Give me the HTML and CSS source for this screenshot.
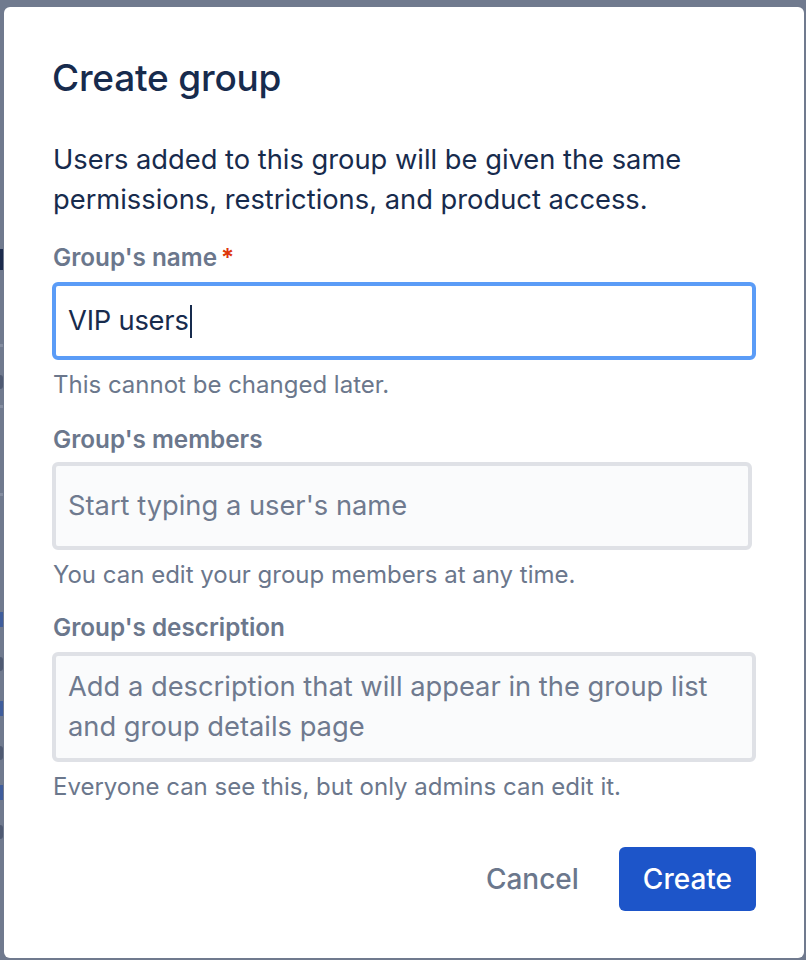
FILE: index.html
```html
<!DOCTYPE html>
<html lang="en">
<head>
<meta charset="utf-8">
<title>Create group</title>
<link rel="stylesheet" href="styles.css">
</head>
<body>
<div class="backdrop">
  <div class="peek">
    <span class="mk mk-dark m1"></span>
    <span class="mk mk-line m2"></span>
    <span class="mk mk-gray m3"></span>
    <span class="mk mk-line m4"></span>
    <span class="mk mk-line m5"></span>
    <span class="mk mk-blue m6"></span>
    <span class="mk mk-gray m7"></span>
    <span class="mk mk-blue m7"></span>
    <span class="mk mk-gray m7"></span>
    <span class="mk mk-blue m8"></span>
    <span class="mk mk-gray m8"></span>
  </div>
</div>

<section class="dialog" role="dialog" aria-labelledby="dlg-title">
  <h1 class="title" id="dlg-title">Create group</h1>
  <p class="intro">Users added to this group will be given the same permissions, restrictions, and product access.</p>

  <div class="field f1">
    <label class="label">Group's name<span class="req">*</span></label>
    <div class="input focused"><span class="value">VIP users</span><span class="caret"></span></div>
    <div class="help">This cannot be changed later.</div>
  </div>

  <div class="field f2">
    <label class="label">Group's members</label>
    <div class="input members"><span class="ph">Start typing a user's name</span></div>
    <div class="help">You can edit your group members at any time.</div>
  </div>

  <div class="field f3">
    <label class="label">Group's description</label>
    <div class="input desc"><span class="ph">Add a description that will appear in the group list and group details page</span></div>
    <div class="help">Everyone can see this, but only admins can edit it.</div>
  </div>

  <div class="actions">
    <button class="btn btn-subtle">Cancel</button>
    <button class="btn btn-primary">Create</button>
  </div>
</section>
</body>
</html>
```

FILE: styles.css
```css
* { box-sizing: border-box; }

html, body {
  margin: 0;
  padding: 0;
}

body {
  width: 806px;
  height: 960px;
  overflow: hidden;
  background: #707a8e;
  font-family: Inter, "Noto Sans", "Liberation Sans", sans-serif;
  color: #172b4d;
  position: relative;
}

.backdrop {
  width: 806px;
  height: 960px;
}

.peek {
  display: flex;
  flex-direction: column;
  width: 4px;
  padding-top: 249px;
}

.mk { display: block; width: 3px; }
.mk-dark { height: 21px; background: #1c2b4c; }
.mk-line { height: 3px; background: #858ea1; }
.mk-gray { height: 14px; background: #4f5a72; border-radius: 0 7px 7px 0; }
.mk-blue { height: 15px; background: #3f5d9c; }
.m2 { margin-top: 74px; }
.m3 { margin-top: 28px; }
.m4 { margin-top: 16px; }
.m5 { margin-top: 85px; }
.m6 { margin-top: 116px; }
.m7 { margin-top: 30px; }
.m8 { margin-top: 25px; }

.dialog {
  position: absolute;
  left: 4px;
  top: 7px;
  width: 800px;
  height: 951px;
  background: #ffffff;
  border-radius: 6px;
  padding: 47px 48px 47px 48px;
  display: flex;
  flex-direction: column;
}

.title {
  margin: 0;
  font-size: 37px;
  line-height: 48px;
  font-weight: 500;
  color: #172b4d;
  letter-spacing: -0.2px;
}

.intro {
  margin: 38px 0 0 0;
  font-size: 27.3px;
  line-height: 40px;
  color: #172b4d;
  padding-left: 1px;
}

.field {
  display: flex;
  flex-direction: column;
}

.f1 { margin-top: 20px; }
.f2 { margin-top: 21px; }
.f3 { margin-top: 19px; }

.label {
  display: block;
  font-size: 24.3px;
  line-height: 34px;
  font-weight: 600;
  color: #6b778c;
  padding-left: 1px;
}

.f1 .label { margin-bottom: 8px; }
.f2 .label { margin-bottom: 6px; }
.f3 .label { margin-bottom: 8px; }

.req {
  color: #de350b;
  margin-left: 4px;
}

.input {
  display: flex;
  align-items: center;
  border: 4px solid #dfe1e6;
  background: #fafbfc;
  border-radius: 6px;
  padding: 0 12px;
  font-size: 27.3px;
  line-height: 40px;
}

.input.focused {
  height: 78px;
  width: 704px;
  border-color: #5b9cf7;
  background: #ffffff;
  color: #172b4d;
}

.value { letter-spacing: -0.2px; }

.caret {
  display: inline-block;
  width: 2px;
  height: 33px;
  background: #172b4d;
  margin-left: 1px;
}

.members {
  height: 88px;
  width: 700px;
}

.desc {
  height: 110px;
  width: 704px;
}

.ph { color: #6f7a8f; }

.help {
  margin-top: 9px;
  font-size: 24px;
  line-height: 32px;
  color: #6b778c;
  padding-left: 1px;
}

.actions {
  margin-top: 44px;
  display: flex;
  justify-content: flex-end;
  gap: 16px;
}

.btn {
  height: 64px;
  border: 0;
  border-radius: 6px;
  padding: 0 24px;
  font-family: inherit;
  font-size: 28px;
  font-weight: 500;
  cursor: pointer;
}

.btn-subtle {
  background: transparent;
  color: #6b778c;
}

.btn-primary {
  background: #1d55c9;
  color: #ffffff;
}
```
